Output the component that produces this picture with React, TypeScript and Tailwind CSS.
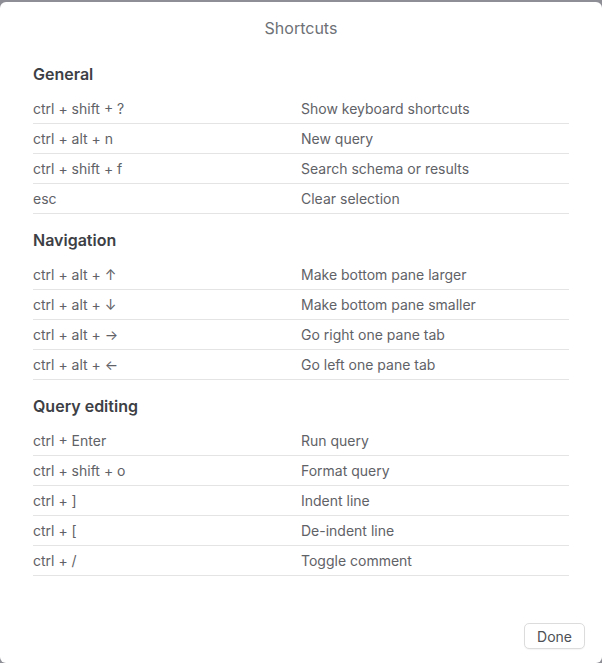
import React from "react";

const sections: { title: string; rows: [string, string][] }[] = [
  {
    title: "General",
    rows: [
      ["ctrl + shift + ?", "Show keyboard shortcuts"],
      ["ctrl + alt + n", "New query"],
      ["ctrl + shift + f", "Search schema or results"],
      ["esc", "Clear selection"],
    ],
  },
  {
    title: "Navigation",
    rows: [
      ["ctrl + alt + \u2191", "Make bottom pane larger"],
      ["ctrl + alt + \u2193", "Make bottom pane smaller"],
      ["ctrl + alt + \u2192", "Go right one pane tab"],
      ["ctrl + alt + \u2190", "Go left one pane tab"],
    ],
  },
  {
    title: "Query editing",
    rows: [
      ["ctrl + Enter", "Run query"],
      ["ctrl + shift + o", "Format query"],
      ["ctrl + ]", "Indent line"],
      ["ctrl + [", "De-indent line"],
      ["ctrl + /", "Toggle comment"],
    ],
  },
];

export default function App() {
  return (
    <div
      className="w-[602px] h-[663px] bg-[#8e8e96] pt-[2px] overflow-hidden"
      style={{ fontFamily: "Inter, 'Noto Sans', sans-serif" }}
    >
      <div className="bg-white rounded-[6px] h-full flex flex-col">
        <div className="pt-[14px] pb-[8px] text-center text-[16px] leading-[24px] text-[#6e7176]">
          Shortcuts
        </div>
        <div className="px-[33px] flex-1">
          {sections.map((s) => (
            <div key={s.title}>
              <div className="mt-[15px] mb-[9px] text-[16px] leading-[22px] font-semibold text-[#3d4045]">
                {s.title}
              </div>
              {s.rows.map(([k, d]) => (
                <div
                  key={k}
                  className="grid grid-cols-2 h-[30px] items-center border-b border-[#e4e4e4] text-[14px] text-[#5f6267]"
                >
                  <div>{k}</div>
                  <div>{d}</div>
                </div>
              ))}
            </div>
          ))}
        </div>
        <div className="flex justify-end pr-[17px] pb-[14px]">
          <button className="w-[61px] h-[26px] rounded-[5px] border border-[#dcdcdc] bg-white text-[14px] text-[#4d5055] shadow-[0_1px_1px_rgba(0,0,0,0.04)]">
            Done
          </button>
        </div>
      </div>
    </div>
  );
}
